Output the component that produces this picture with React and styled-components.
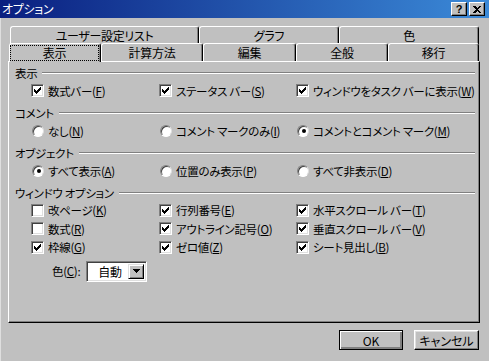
import styled, { createGlobalStyle } from 'styled-components';

const Global = createGlobalStyle`
  html, body { margin: 0; padding: 0; background: #c0c0c0; }
  body {
    font-family: "Noto Sans CJK JP", "Liberation Sans", sans-serif;
    font-size: 11.5px;
    letter-spacing: -0.3px;
    color: #000;
    font-feature-settings: "palt";
  }
`;

const Window = styled.div`
  width: 489px;
  height: 361px;
  background: #c0c0c0;
  display: flex;
  flex-direction: column;
  overflow: hidden;
  box-shadow: inset 1px 0 #dfdfdf;
`;

const TitleBar = styled.div`
  height: 18px;
  display: flex;
  align-items: center;
  padding: 0 4px 0 2px;
  background: linear-gradient(to right, #0a1f80, #3b8ad8);
  color: #fff;
`;

const Title = styled.span`
  flex: 1;
  line-height: 18px;
  font-size: 12px;
`;

const TitleButton = styled.button`
  width: 16px;
  height: 14px;
  margin-left: ${p => p.$gap || 0}px;
  padding: 0;
  background: #c0c0c0;
  border: 1px solid;
  border-color: #fff #000 #000 #fff;
  box-shadow: inset -1px -1px #808080;
  display: flex;
  align-items: center;
  justify-content: center;
  font: bold 11px "Liberation Sans", sans-serif;
  color: #000;
`;

const Body = styled.div`
  padding: 8px 9px 0 8px;
  display: flex;
  flex-direction: column;
`;

const TabRow = styled.div`
  display: flex;
  height: 18px;
  margin: ${p => (p.$top ? '0 1px 0 2px' : '-1px 1px 0 1px')};
`;

const Tab = styled.div`
  width: ${p => p.$w}px;
  box-sizing: border-box;
  border-top: 1px solid #fff;
  border-left: 1px solid #fff;
  border-right: 1px solid #000;
  box-shadow: inset -1px 0 #808080;
  border-radius: 3px 3px 0 0;
  display: flex;
  align-items: center;
  justify-content: center;
  padding-top: ${p => (p.$active ? 1 : 0)}px;
  position: relative;
  z-index: ${p => (p.$active ? 2 : 0)};
  background: #c0c0c0;
  height: ${p => (p.$active ? 19 : 18)}px;
  font-size: 12px;
`;

const Focus = styled.span`
  flex: 1;
  margin: 0 2px 1px 1px;
  outline: 1px dotted #000;
  text-align: center;
  line-height: 14px;
`;

const Panel = styled.div`
  height: 262px;
  box-sizing: border-box;
  border-top: 1px solid #fff;
  border-left: 1px solid #fff;
  border-right: 1px solid #000;
  border-bottom: 1px solid #000;
  box-shadow: inset -1px -1px #808080;
  padding: 2px 4px 0 6px;
`;

const GroupHead = styled.div`
  display: flex;
  align-items: center;
  height: 17px;
  &::after {
    content: '';
    flex: 1;
    margin-left: 5px;
    margin-top: 1px;
    border-top: 1px solid #808080;
    border-bottom: 1px solid #fff;
  }
`;

const Grid = styled.div`
  display: grid;
  grid-template-columns: 128px 137px 1fr;
  grid-auto-rows: ${p => p.$row || 19}px;
  padding-left: 16px;
  margin-bottom: ${p => p.$after || 0}px;
`;

const Item = styled.label`
  display: flex;
  align-items: center;
  gap: 4px;
  white-space: nowrap;
`;

const Box = styled.span`
  width: 13px;
  height: 13px;
  box-sizing: border-box;
  background: #fff;
  border: 1px solid;
  border-color: #808080 #fff #fff #808080;
  box-shadow: inset 1px 1px #404040, inset -1px -1px #dfdfdf;
  display: flex;
  align-items: center;
  justify-content: center;
  flex: none;
`;

const Round = styled.span`
  width: 12px;
  height: 12px;
  box-sizing: border-box;
  border-radius: 50%;
  background: #fff;
  border: 1px solid;
  border-color: #808080 #dfdfdf #fff #808080;
  box-shadow: inset 1px 1px #404040;
  display: flex;
  align-items: center;
  justify-content: center;
  flex: none;
  margin-left: 1px;
  &::after {
    content: '';
    display: ${p => (p.$on ? 'block' : 'none')};
    width: 4px;
    height: 4px;
    border-radius: 50%;
    background: #000;
    margin: 1px 0 0 1px;
  }
`;

const ColorRow = styled.div`
  display: flex;
  align-items: center;
  gap: 6px;
  padding-left: 37px;
  margin-top: 4px;
`;

const Select = styled.div`
  width: 61px;
  height: 21px;
  box-sizing: border-box;
  background: #fff;
  border: 1px solid;
  border-color: #808080 #fff #fff #808080;
  box-shadow: inset 1px 1px #404040, inset -1px -1px #dfdfdf;
  display: flex;
  align-items: center;
  padding: 2px;
`;

const SelectText = styled.span`
  flex: 1;
  padding-left: 9px;
  font-size: 12px;
`;

const Drop = styled.span`
  width: 16px;
  height: 15px;
  box-sizing: border-box;
  background: #c0c0c0;
  border: 1px solid;
  border-color: #dfdfdf #000 #000 #dfdfdf;
  box-shadow: inset 1px 1px #fff, inset -1px -1px #808080;
  display: flex;
  align-items: center;
  justify-content: center;
`;

const Footer = styled.div`
  display: flex;
  justify-content: flex-end;
  gap: 11px;
  padding: 7px 1px 0 0;
`;

const Button = styled.button`
  width: ${p => p.$w}px;
  height: 20px;
  box-sizing: border-box;
  padding: 0;
  background: #c0c0c0;
  font: inherit;
  font-size: 12px;
  color: #000;
  border: 1px solid;
  border-color: ${p => (p.$def ? '#000' : '#fff #000 #000 #fff')};
  box-shadow: ${p =>
    p.$def
      ? 'inset 1px 1px #fff, inset -2px -2px #808080, inset -1px -1px #000'
      : 'inset -1px -1px #808080, inset 1px 1px #dfdfdf'};
`;

const TICK = [
  [6], [5, 6], [0, 4, 5, 6], [0, 1, 3, 4, 5], [0, 1, 2, 3, 4], [1, 2, 3], [2],
];

const Tick = () => (
  <svg width="7" height="7" shapeRendering="crispEdges">
    {TICK.map((row, y) => row.map(x => <rect key={`${x}-${y}`} x={x} y={y} width="1" height="1" fill="#000" />))}
  </svg>
);

const Check = ({ on, children }) => (
  <Item>
    <Box>{on && <Tick />}</Box>
    <span>{children}</span>
  </Item>
);

const Radio = ({ on, children }) => (
  <Item>
    <Round $on={on} />
    <span>{children}</span>
  </Item>
);

const K = ({ text, k }) => (
  <>
    {text}(<u>{k}</u>)
  </>
);

export default function App() {
  return (
    <>
      <Global />
      <Window>
        <TitleBar>
          <Title>オプション</Title>
          <TitleButton>?</TitleButton>
          <TitleButton $gap={2}>
            <svg width="8" height="7" shapeRendering="crispEdges">
              <path d="M0 0h2l2 2 2-2h2L5 3.5 8 7H6L4 5 2 7H0l3-3.5z" fill="#000" />
            </svg>
          </TitleButton>
        </TitleBar>
        <Body>
          <TabRow $top>
            <Tab $w={189}>ユーザー設定リスト</Tab>
            <Tab $w={140}>グラフ</Tab>
            <Tab $w={140}>色</Tab>
          </TabRow>
          <TabRow>
            <Tab $w={92} $active><Focus>表示</Focus></Tab>
            <Tab $w={102}>計算方法</Tab>
            <Tab $w={93}>編集</Tab>
            <Tab $w={92}>全般</Tab>
            <Tab $w={91}>移行</Tab>
          </TabRow>
          <Panel>
            <GroupHead>表示</GroupHead>
            <Grid $after={4}>
              <Check on><K text="数式バー" k="F" /></Check>
              <Check on><K text="ステータス バー" k="S" /></Check>
              <Check on><K text="ウィンドウをタスク バーに表示" k="W" /></Check>
            </Grid>
            <GroupHead>コメント</GroupHead>
            <Grid $after={4}>
              <Radio><K text="なし" k="N" /></Radio>
              <Radio><K text="コメント マークのみ" k="I" /></Radio>
              <Radio on><K text="コメントとコメント マーク" k="M" /></Radio>
            </Grid>
            <GroupHead>オブジェクト</GroupHead>
            <Grid $after={4}>
              <Radio on><K text="すべて表示" k="A" /></Radio>
              <Radio><K text="位置のみ表示" k="P" /></Radio>
              <Radio><K text="すべて非表示" k="D" /></Radio>
            </Grid>
            <GroupHead>ウィンドウ オプション</GroupHead>
            <Grid $row={18.5}>
              <Check><K text="改ページ" k="K" /></Check>
              <Check on><K text="行列番号" k="E" /></Check>
              <Check on><K text="水平スクロール バー" k="T" /></Check>
              <Check><K text="数式" k="R" /></Check>
              <Check on><K text="アウトライン記号" k="O" /></Check>
              <Check on><K text="垂直スクロール バー" k="V" /></Check>
              <Check on><K text="枠線" k="G" /></Check>
              <Check on><K text="ゼロ値" k="Z" /></Check>
              <Check on><K text="シート見出し" k="B" /></Check>
            </Grid>
            <ColorRow>
              <span><K text="色" k="C" />:</span>
              <Select>
                <SelectText>自動</SelectText>
                <Drop>
                  <svg width="7" height="4" shapeRendering="crispEdges">
                    <path d="M0 0h7L3.5 4z" fill="#000" />
                  </svg>
                </Drop>
              </Select>
            </ColorRow>
          </Panel>
          <Footer>
            <Button $w={64} $def>OK</Button>
            <Button $w={65}>キャンセル</Button>
          </Footer>
        </Body>
      </Window>
    </>
  );
}
